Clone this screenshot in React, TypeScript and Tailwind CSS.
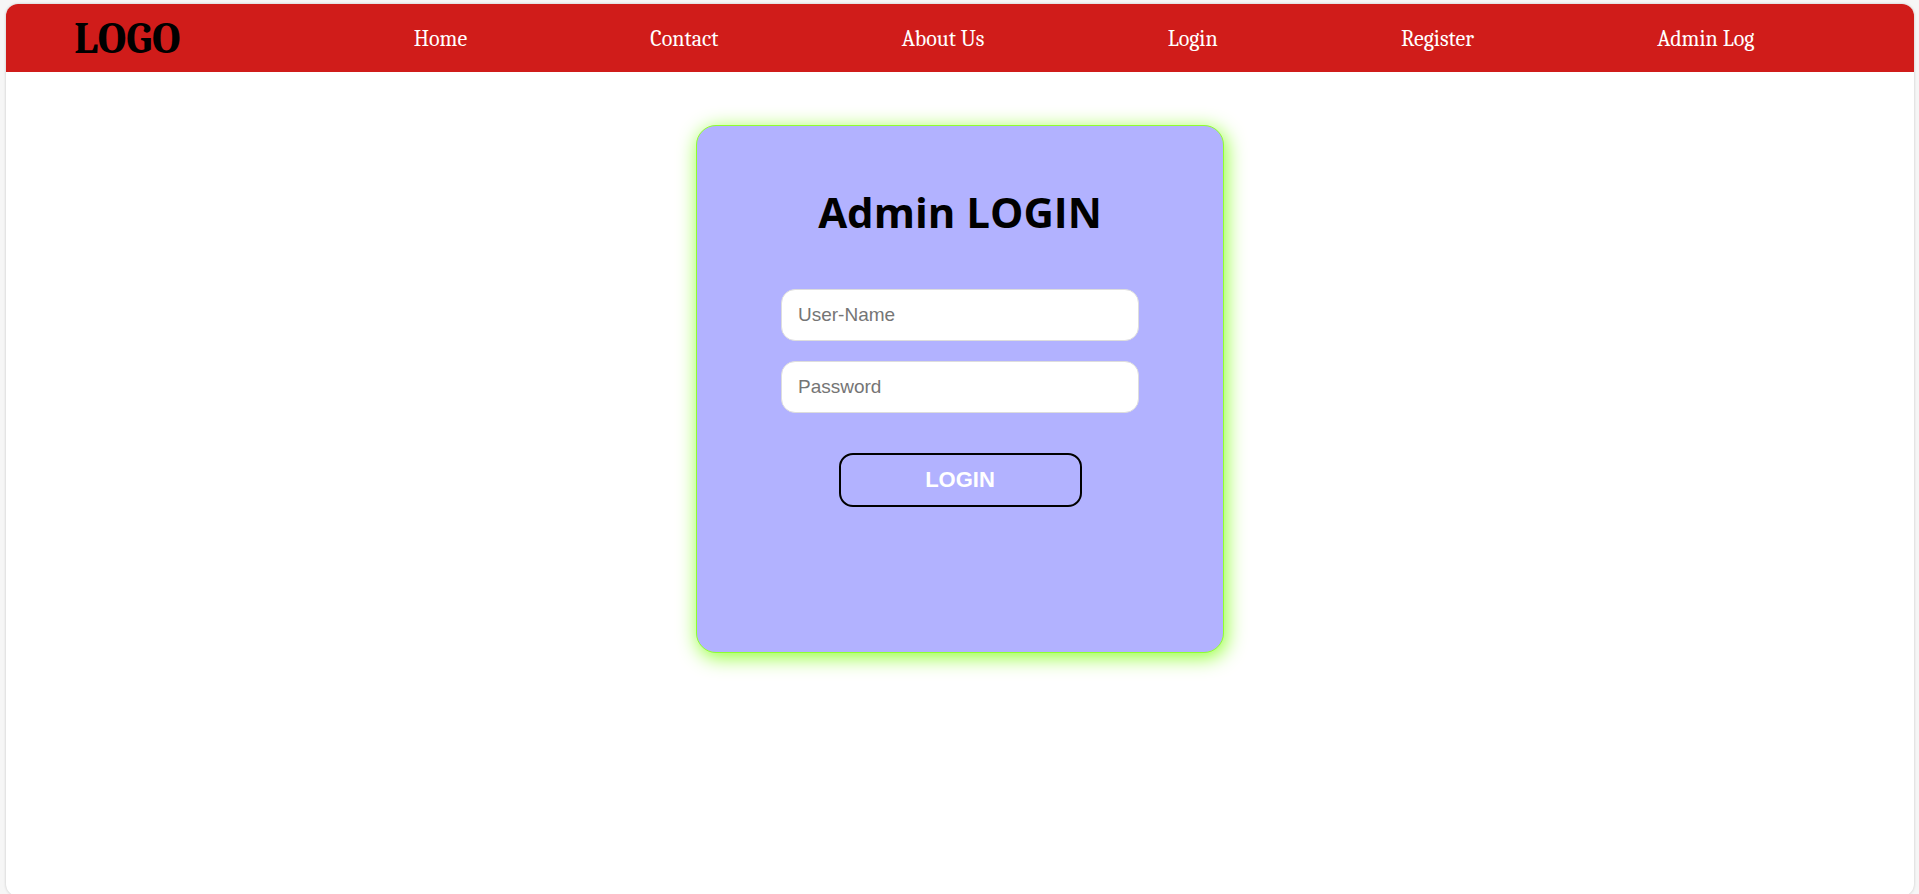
const links = ["Home", "Contact", "About Us", "Login", "Register", "Admin Log"];

const fieldClass =
  "h-[52px] w-full rounded-[14px] border border-[#dddddd] bg-white px-4 text-[19px] text-black placeholder:text-[#757575] placeholder:opacity-100";

function Header() {
  return (
    <header className="flex h-[68px] items-center justify-between rounded-t-xl bg-[#d01c1a] px-[68px] pt-0.5 font-['Cambria','Liberation_Serif',serif]">
      <a href="#" className="text-[44px] leading-none font-bold text-black">
        LOGO
      </a>
      <nav className="w-[86%] shrink-0">
        <ul className="flex justify-around">
          {links.map((label) => (
            <li key={label}>
              <a href="#" className="text-[22px] whitespace-nowrap text-white">
                {label}
              </a>
            </li>
          ))}
        </ul>
      </nav>
    </header>
  );
}

function LoginCard() {
  return (
    <form
      onSubmit={(e) => e.preventDefault()}
      className="mx-auto mt-[53px] flex min-h-[528px] w-full max-w-[528px] flex-col items-center rounded-[20px] border border-[#8fff2f] bg-[#b2b2ff] px-[84px] pt-14 shadow-[2px_4px_20px_#8fff2f]"
    >
      <h1 className="font-['Segoe_UI','Open_Sans',sans-serif] text-[42px] leading-[60px] font-bold whitespace-nowrap text-black">
        Admin LOGIN
      </h1>
      <div className="mt-[47px] flex w-full flex-col gap-5">
        <input type="text" aria-label="User-Name" placeholder="User-Name" className={fieldClass} />
        <input type="password" aria-label="Password" placeholder="Password" className={fieldClass} />
      </div>
      <button
        type="submit"
        className="mt-10 h-[54px] w-[243px] rounded-[14px] border-2 border-black pb-0.5 text-[22px] font-bold text-white"
      >
        LOGIN
      </button>
    </form>
  );
}

export default function App() {
  return (
    <div className="h-screen overflow-hidden bg-[#f6f6f6] pt-1 pr-[5px] pl-1.5 font-['Liberation_Sans',Arial,sans-serif]">
      <div className="h-[calc(100vh-2px)] rounded-xl bg-white shadow-[0_0_3px_rgba(0,0,0,0.2)]">
        <Header />
        <main>
          <LoginCard />
        </main>
      </div>
    </div>
  );
}
